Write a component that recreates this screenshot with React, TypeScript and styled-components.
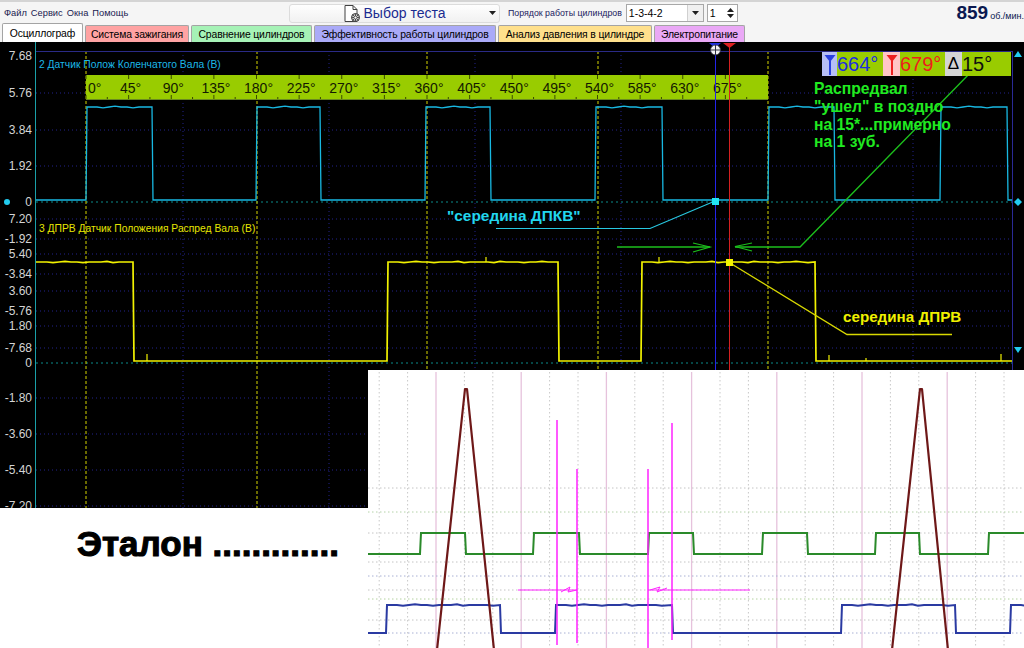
import React from "react";
import styled, { createGlobalStyle } from "styled-components";

const GlobalStyle = createGlobalStyle`
  html, body {
    margin: 0;
    padding: 0;
    background: #000;
  }
  body {
    font-family: "Liberation Sans", Arial, sans-serif;
  }
  #root {
    width: 1024px;
    height: 648px;
    overflow: hidden;
  }
`;

const SANS = `"Liberation Sans", Arial, sans-serif`;

// ---------- helpers ----------

// builds a square wave path; highs are [start, end] x pairs
function squareWave(
  highs: [number, number][],
  x0: number,
  x1: number,
  lo: number,
  hi: number,
  jitter = 0
): string {
  let d = "";
  let started = false;
  for (const [a, b] of highs) {
    if (!started) {
      d = a <= x0 ? `M${x0},${hi}` : `M${x0},${lo} L${a},${lo} L${a + 1},${hi}`;
      started = true;
    } else {
      d += ` L${a},${lo} L${a + 1},${hi}`;
    }
    if (jitter) {
      let n = 0;
      for (let x = Math.max(a, x0) + 5; x < b - 4; x += 6) {
        // only a few small bumps, like sensor noise
        const bump = n % 5 === 2 ? jitter : n % 7 === 4 ? -jitter : 0;
        d += ` L${x},${hi + bump}`;
        n++;
      }
    }
    if (b >= x1) {
      d += ` L${x1},${hi}`;
      return d;
    }
    d += ` L${b},${hi} L${b + 1},${lo}`;
  }
  d += ` L${x1},${lo}`;
  return d;
}

// ---------- toolbar ----------

const Page = styled.div`
  display: flex;
  flex-direction: column;
  width: 1024px;
  height: 648px;
  overflow: hidden;
  font-family: ${SANS};
`;

const Toolbar = styled.div`
  display: flex;
  align-items: center;
  height: 24px;
  box-sizing: border-box;
  border-top: 2px solid #d4d4d4;
  background: #f5f5f5;
  padding-left: 4px;
  overflow: hidden;
  white-space: nowrap;
`;

const Menu = styled.div`
  display: flex;
  gap: 4px;
  width: 285px;
  font-size: 9.3px;
  color: #1a1a50;
`;

const TestSelect = styled.div`
  display: flex;
  align-items: center;
  width: 211px;
  height: 19px;
  box-sizing: border-box;
  border: 1px solid #dcdcdc;
  border-radius: 3px;
  background: linear-gradient(#fefefe, #f1f1f1);
`;

const TestLabel = styled.div`
  flex: 1;
  display: flex;
  align-items: center;
  justify-content: center;
  gap: 3px;
  padding-left: 12px;
  font-size: 14px;
  color: #1a2a90;
`;

const Caret = styled.div`
  width: 14px;
  display: flex;
  justify-content: center;
`;

const OrderGroup = styled.div`
  display: flex;
  align-items: center;
  margin-left: 8px;
`;

const OrderLabel = styled.span`
  font-size: 8.8px;
  color: #1a1a60;
`;

const Select = styled.div`
  display: flex;
  align-items: stretch;
  width: 78px;
  height: 18px;
  margin-left: 4px;
  box-sizing: border-box;
  border: 1px solid #a8a8a8;
  background: #fff;
  font-size: 10.5px;
`;

const SelectValue = styled.div`
  flex: 1;
  display: flex;
  align-items: center;
  padding-left: 2px;
  color: #000;
`;

const SelectButton = styled.div`
  width: 15px;
  display: flex;
  align-items: center;
  justify-content: center;
  border-left: 1px solid #d0d0d0;
  background: #f0f0f0;
`;

const Spinner = styled(Select)`
  width: 31px;
  margin-left: 3px;
`;

const SpinButtons = styled.div`
  width: 12px;
  display: flex;
  flex-direction: column;
  align-items: center;
  justify-content: center;
  gap: 2px;
`;

const Rpm = styled.div`
  display: flex;
  align-items: baseline;
  margin-left: auto;
  color: #0a1850;
`;

const RpmValue = styled.span`
  font-size: 19px;
  font-weight: bold;
`;

const RpmUnit = styled.span`
  font-size: 9px;
  margin-left: 2px;
`;

// ---------- tabs ----------

const TabBar = styled.div`
  display: flex;
  align-items: flex-end;
  gap: 2px;
  height: 18px;
  padding-left: 2px;
  background: #f5f5f5;
`;

const Tab = styled.div<{ $bg: string; $w: number; $active?: boolean }>`
  width: ${(p) => p.$w}px;
  height: ${(p) => (p.$active ? 19 : 17)}px;
  box-sizing: border-box;
  display: flex;
  align-items: center;
  justify-content: center;
  background: ${(p) => p.$bg};
  border: 1px solid #a4a4a4;
  border-bottom: none;
  border-radius: 2px 2px 0 0;
  font-size: 10.4px;
  letter-spacing: -0.15px;
  color: #000;
  white-space: nowrap;
  overflow: hidden;
`;

// ---------- scope ----------

const Scope = styled.div`
  position: relative;
  height: 606px;
  background: #000;
  overflow: hidden;
`;

const Readout = styled.div`
  position: absolute;
  left: 822px;
  top: 10px;
  display: flex;
  height: 24px;
`;

const ReadIcon = styled.div<{ $bg: string; $w: number }>`
  width: ${(p) => p.$w}px;
  display: flex;
  align-items: center;
  justify-content: center;
  background: ${(p) => p.$bg};
  font-size: 17px;
  color: #000;
`;

const ReadValue = styled.div<{ $color: string; $w: number }>`
  width: ${(p) => p.$w}px;
  display: flex;
  align-items: center;
  background: #99cc00;
  color: ${(p) => p.$color};
  font-size: 20px;
  line-height: 24px;
`;

const Note = styled.div<{ $color: string; $x: number; $y: number; $size: number; $lh: number }>`
  position: absolute;
  left: ${(p) => p.$x}px;
  top: ${(p) => p.$y}px;
  color: ${(p) => p.$color};
  font-size: ${(p) => p.$size}px;
  line-height: ${(p) => p.$lh}px;
  font-weight: bold;
  white-space: pre;
`;

const EtalonPanel = styled.div`
  position: absolute;
  left: 0;
  top: 466px;
  width: 368px;
  height: 140px;
  box-sizing: border-box;
  padding: 16px 0 0 77px;
  background: #fff;
`;

const EtalonText = styled.div`
  font-size: 35px;
  line-height: 40px;
  font-weight: bold;
  color: #000;
  -webkit-text-stroke: 1.1px #000;
  white-space: nowrap;
`;

const Shot = styled.div`
  position: absolute;
  left: 368px;
  top: 328px;
  width: 656px;
  height: 278px;
  background: #fff;
`;

// ---------- icons ----------

const DocIcon = () => (
  <svg width="19" height="19" viewBox="0 0 19 19">
    <path d="M3 1.5 H11 L15 5.5 V17.5 H3 Z" fill="#fff" stroke="#404040" strokeWidth="1" />
    <path d="M11 1.5 V5.5 H15" fill="none" stroke="#404040" strokeWidth="1" />
    <circle cx="13.5" cy="13.5" r="4" fill="#d8d8d8" stroke="#303030" strokeWidth="1" />
    <path d="M13.5 10 V17 M10 13.5 H17 M11 11 L16 16 M16 11 L11 16" stroke="#303030" strokeWidth="0.8" />
    <circle cx="13.5" cy="13.5" r="1.5" fill="#fff" stroke="#303030" strokeWidth="0.6" />
  </svg>
);

const Tri = ({ up }: { up?: boolean }) => (
  <svg width="7" height="4" viewBox="0 0 7 4">
    <path d={up ? "M0 4 L3.5 0 L7 4 Z" : "M0 0 L7 0 L3.5 4 Z"} fill="#202020" />
  </svg>
);

const Funnel = ({ color }: { color: string }) => (
  <svg width="12" height="22" viewBox="0 0 12 22">
    <path d="M0.5 2 H11.5 L6 9 Z" fill={color} />
    <path d="M6 8 V22" stroke={color} strokeWidth="2" />
  </svg>
);

// ---------- data ----------

const tabs = [
  { label: "Осциллограф", bg: "#ffffff", w: 81, active: true },
  { label: "Система зажигания", bg: "#ffa3a3", w: 104 },
  { label: "Сравнение цилиндров", bg: "#a6f2b6", w: 121 },
  { label: "Эффективность работы цилиндров", bg: "#aaaaf8", w: 182 },
  { label: "Анализ давления в цилиндре", bg: "#ffe08c", w: 154 },
  { label: "Электропитание", bg: "#eaa8f6", w: 91 },
];

const axisLabels: [number, string][] = [
  [56, "7.68"], [93, "5.76"], [130, "3.84"], [166, "1.92"], [202, "0"],
  [219, "7.20"], [239, "-1.92"], [254, "5.40"], [274, "-3.84"], [291, "3.60"],
  [311, "-5.76"], [326, "1.80"], [348, "-7.68"], [363, "0"],
  [398, "-1.80"], [434, "-3.60"], [470, "-5.40"], [506, "-7.20"],
];

const hGrid = [93, 130, 166, 219, 239, 254, 274, 291, 311, 326, 348, 398, 434, 470, 506];
const vGridBlue = [183, 329, 475, 621, 913];
const vGridYellow = [86, 257, 427, 598, 768];
const rulerTicks = Array.from({ length: 16 }, (_, k) => ({ deg: k * 45, x: 86 + k * 42.625 }));

const crankPath = squareWave(
  [[86, 152], [256, 320], [425, 490], [595, 662], [768, 834], [940, 1007]],
  36, 1012, 200, 107, 0.8
);
const camPath = squareWave([[35, 133], [387, 558], [641, 815]], 36, 1012, 361, 262, 0.6);
const camSpikes: [number, number, number][] = [
  [147, 361, 354], [486, 262, 257], [659, 262, 257], [829, 361, 355], [866, 361, 358], [1001, 361, 354],
];

const ScopeDrawing = () => (
  <svg width="1024" height="606" viewBox="0 42 1024 606" style={{ display: "block" }}>
    {/* grid */}
    {hGrid.map((y) => (
      <line key={y} x1="36" x2="1012" y1={y} y2={y} stroke="#22228c" strokeDasharray="1 3" />
    ))}
    {[202, 363].map((y) => (
      <line key={y} x1="36" x2="1012" y1={y} y2={y} stroke="#0a8a8a" strokeWidth="1.2" strokeDasharray="2 3" />
    ))}
    {vGridBlue.map((x) => (
      <line key={x} x1={x} x2={x} y1="51" y2="648" stroke="#22228c" strokeDasharray="1 3" />
    ))}
    {vGridYellow.map((x) => (
      <line key={x} x1={x} x2={x} y1="51" y2="648" stroke="#d4d400" strokeDasharray="3 2" />
    ))}
    <line x1="35" x2="1012" y1="51.5" y2="51.5" stroke="#2a2a86" />
    <line x1="35.5" x2="35.5" y1="42" y2="648" stroke="#1aa0a8" />
    <line x1="1012.5" x2="1012.5" y1="51" y2="648" stroke="#2a2a96" />

    {/* axis labels */}
    {axisLabels.map(([y, t]) => (
      <text key={y} x="32" y={y} dy="0.36em" textAnchor="end" fontSize="12" fill="#d4d4d4" fontFamily={SANS}>
        {t}
      </text>
    ))}
    <circle cx="7" cy="202" r="3" fill="#22ccf0" />

    {/* channel names */}
    <text x="39" y="64" dy="0.36em" fontSize="10.3" fill="#1cb8e8" fontFamily={SANS}>
      2 Датчик Полож Коленчатого Вала (В)
    </text>
    <text x="39" y="228" dy="0.36em" fontSize="10.3" fill="#e6e600" fontFamily={SANS}>
      3 ДПРВ Датчик Положения Распред Вала (В)
    </text>

    {/* degree ruler */}
    <rect x="86" y="75" width="682" height="25" fill="#99cc00" />
    <line x1="86" x2="768" y1="99.5" y2="99.5" stroke="#6a8a20" />
    {rulerTicks.map(({ deg, x }) => (
      <g key={deg}>
        <line x1={x} x2={x} y1="75" y2="79" stroke="#3a4a00" />
        <line x1={x} x2={x} y1="95" y2="99" stroke="#3a4a00" />
        <line x1={x + 21.3} x2={x + 21.3} y1="97" y2="99" stroke="#3a4a00" />
        <text
          x={x + 2}
          y="88"
          dy="0.36em"
          textAnchor={deg === 0 ? "start" : "middle"}
          fontSize="14"
          fill="#141a00"
          fontFamily={SANS}
        >
          {deg}°
        </text>
      </g>
    ))}

    {/* waveforms */}
    <path d={crankPath} fill="none" stroke="#18b8e2" strokeWidth="1.3" />
    <path d={camPath} fill="none" stroke="#f2f200" strokeWidth="1.7" />
    {camSpikes.map(([x, y1, y2]) => (
      <line key={x} x1={x} x2={x} y1={y1} y2={y2} stroke="#f2f200" strokeWidth="1.2" />
    ))}

    {/* cursors */}
    <line x1="715.5" x2="715.5" y1="44" y2="648" stroke="#2424e8" />
    <line x1="729.5" x2="729.5" y1="44" y2="648" stroke="#d42020" />
    <path d="M709 43 H721 L715 48 Z" fill="#2030e0" />
    <path d="M723 43 H736 L729.5 48 Z" fill="#e02020" />
    <circle cx="715.5" cy="50" r="5" fill="#f4f4f4" stroke="#303040" strokeWidth="0.8" />
    <path d="M715.5 45 V55 M710.5 50 H720.5" stroke="#303040" strokeWidth="1" />

    {/* right side markers */}
    <path d="M1014 57 L1018 51 L1022 57 Z" fill="#22ccf0" />
    <path d="M1018 198 L1022 202 L1018 206 L1014 202 Z" fill="#22ccf0" />
    <path d="M1014 347 L1022 347 L1018 353 Z" fill="#22ccf0" />

    {/* cyan annotation */}
    <path d="M496 228.5 H650 L715 201" fill="none" stroke="#28c8e0" strokeWidth="1.2" />
    <rect x="712" y="198" width="7" height="7" fill="#22e4f4" />

    {/* yellow annotation */}
    <path d="M730 263 L847 334.5 H952" fill="none" stroke="#d8d800" strokeWidth="1.3" />
    <rect x="726" y="259" width="7" height="7" fill="#f4f400" />

    {/* green annotation */}
    <path d="M973 70 L800 247 H735" fill="none" stroke="#1cc01c" strokeWidth="1.3" />
    <path d="M752 243 L735 246.5 L752 251" fill="none" stroke="#1cc01c" strokeWidth="1.2" />
    <path d="M617 247 H710" fill="none" stroke="#1cc01c" strokeWidth="1.3" />
    <path d="M693 243 L710 247 L693 252" fill="none" stroke="#1cc01c" strokeWidth="1.2" />
  </svg>
);

// ---------- pasted reference capture ----------

const pinkX = Array.from({ length: 7 }, (_, k) => 436 + k * 85.2);
const greyX: number[] = [];
for (let k = -1; k < 7; k++) {
  const base = 436 + k * 85.2;
  greyX.push(base + 28.4, base + 56.8);
}
const shotH: [number, string][] = [
  [488, "#c4c4c4"], [512, "#b4d2a8"], [533, "#c4c4c4"], [562, "#c4c4c4"], [576, "#a8b0d4"],
  [590, "#c4c4c4"], [599, "#b4d2a0"], [620, "#c4c4c4"], [633, "#a8b0d4"],
];

const greenPath = squareWave(
  [[420, 465], [533, 579], [648, 693], [762, 807], [875, 919], [988, 1040]],
  368, 1024, 554, 533
);
const bluePath = squareWave([[386, 500], [555, 672], [841, 955], [1010, 1040]], 368, 1024, 633, 605, 0.8);

const ShotDrawing = () => (
  <svg width="656" height="278" viewBox="368 370 656 278" style={{ display: "block" }}>
    {greyX.map((x) => (
      <line key={x} x1={x} x2={x} y1="372" y2="648" stroke="#c8c8c8" strokeDasharray="1.5 2.5" />
    ))}
    {pinkX.map((x) => (
      <line key={x} x1={x} x2={x} y1="372" y2="648" stroke="#e6c2dc" strokeWidth="1.3" />
    ))}
    {shotH.map(([y, c]) => (
      <line key={y} x1="368" x2="1024" y1={y} y2={y} stroke={c} strokeDasharray="1.5 2.5" />
    ))}
    <path d={greenPath} fill="none" stroke="#2a8a2a" strokeWidth="2" />
    <path d={bluePath} fill="none" stroke="#2a3aa2" strokeWidth="2" />
    <path d="M437 650 L465 389 L467 389 L494 650" fill="none" stroke="#6e1818" strokeWidth="2.2" strokeLinejoin="round" />
    <path d="M892 650 L920 389 L922 389 L948 650" fill="none" stroke="#6e1818" strokeWidth="2.2" strokeLinejoin="round" />
    {[
      [557, 420, 645],
      [577, 469, 643],
      [648, 469, 648],
      [672, 423, 640],
    ].map(([x, y1, y2]) => (
      <line key={x} x1={x} x2={x} y1={y1} y2={y2} stroke="#ff22ff" strokeWidth="1.5" />
    ))}
    <path d="M518 590 H577 M561 592 L570 587 L568 592 L577 590" fill="none" stroke="#ff22ff" strokeWidth="1" />
    <path d="M648 590 H750 M650 590 L660 587 L657 592 L667 588" fill="none" stroke="#ff22ff" strokeWidth="1" />
  </svg>
);

// ---------- app ----------

export default function App() {
  return (
    <Page>
      <GlobalStyle />
      <Toolbar>
        <Menu>
          <span>Файл</span>
          <span>Сервис</span>
          <span>Окна</span>
          <span>Помощь</span>
        </Menu>
        <TestSelect>
          <TestLabel>
            <DocIcon />
            Выбор теста
          </TestLabel>
          <Caret>
            <Tri />
          </Caret>
        </TestSelect>
        <OrderGroup>
          <OrderLabel>Порядок работы цилиндров</OrderLabel>
          <Select>
            <SelectValue>1-3-4-2</SelectValue>
            <SelectButton>
              <Tri />
            </SelectButton>
          </Select>
          <Spinner>
            <SelectValue>1</SelectValue>
            <SpinButtons>
              <Tri up />
              <Tri />
            </SpinButtons>
          </Spinner>
        </OrderGroup>
        <Rpm>
          <RpmValue>859</RpmValue>
          <RpmUnit>об./мин.</RpmUnit>
        </Rpm>
      </Toolbar>

      <TabBar>
        {tabs.map((t) => (
          <Tab key={t.label} $bg={t.bg} $w={t.w} $active={t.active}>
            {t.label}
          </Tab>
        ))}
      </TabBar>

      <Scope>
        <ScopeDrawing />

        <Readout>
          <ReadIcon $bg="#b6bef6" $w={15}>
            <Funnel color="#2840e0" />
          </ReadIcon>
          <ReadValue $color="#1c2ce0" $w={46}>664°</ReadValue>
          <ReadIcon $bg="#ffc6c6" $w={17}>
            <Funnel color="#ee2020" />
          </ReadIcon>
          <ReadValue $color="#ee1c1c" $w={45}>679°</ReadValue>
          <ReadIcon $bg="#d4d4d4" $w={17}>Δ</ReadIcon>
          <ReadValue $color="#101010" $w={49}>15°</ReadValue>
        </Readout>

        <Note $color="#20ea20" $x={814} $y={38} $size={15.7} $lh={17.8}>
          {"Распредвал\n\"ушел\" в поздно\nна 15*...примерно\nна 1 зуб."}
        </Note>
        <Note $color="#22d6ee" $x={447} $y={165} $size={15.4} $lh={18}>
          "середина ДПКВ"
        </Note>
        <Note $color="#f0f000" $x={843} $y={266} $size={15.2} $lh={18}>
          середина ДПРВ
        </Note>

        <Shot>
          <ShotDrawing />
        </Shot>
        <EtalonPanel>
          <EtalonText>Эталон .............</EtalonText>
        </EtalonPanel>
      </Scope>
    </Page>
  );
}
